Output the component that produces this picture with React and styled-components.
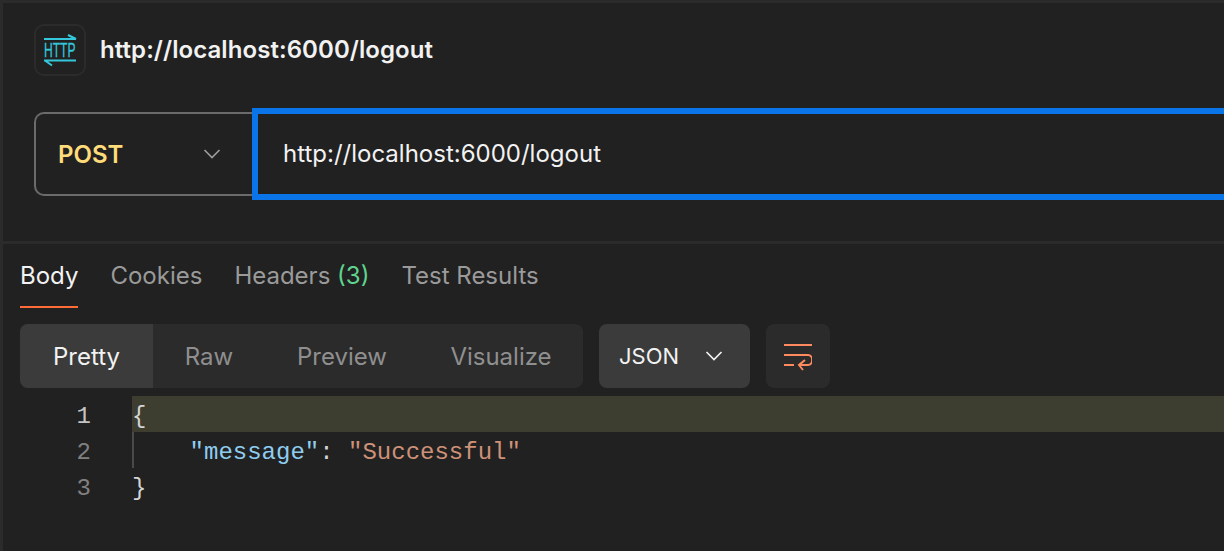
import React from "react";
import styled, { createGlobalStyle } from 'styled-components';

const Global = createGlobalStyle`
    html, body {
        margin: 0;
        height: 100%;
        background: #212121;
        overflow: hidden;
    }
    #root {
        height: 100%;
    }
`

function HttpIcon(){
    return (
        <svg width="52" height="52" viewBox="0 0 52 52" fill="none">
            <path d="M10 15H42M34 11L42 15M10 36.5H42M11 36.5L18 41.5" stroke="#35c7dc" strokeWidth="2"/>
            <text transform="translate(10 33) scale(.62 1)" fontFamily="'Liberation Sans', sans-serif" fontSize="19.5" fill="#35c7dc" stroke="#35c7dc" strokeWidth="0.3">HTTP</text>
        </svg>
    )
}

function Chevron({ color }){
    return (
        <svg width="18" height="10" viewBox="0 0 18 10" fill="none">
            <path d="M1.5 1L9 8.5L16.5 1" stroke={color} strokeWidth="1.7"/>
        </svg>
    )
}

function WrapIcon(){
    return (
        <svg width="28" height="32" viewBox="0 0 28 32" fill="none">
            <path d="M0 5H28M0 15H24C29.5 15 29.5 25 24 25H15M21 20L15 25L19 30M0 25H10" stroke="#ff8a5f" strokeWidth="2"/>
        </svg>
    )
}

export default function App(){
    return (
        <Page>
            <Global />
            <Request>
                <Title>
                    <IconBox><HttpIcon /></IconBox>
                    <h1>http://localhost:6000/logout</h1>
                </Title>
                <UrlRow>
                    <Method>
                        <span>POST</span>
                        <Chevron color="#9b9b9b" />
                    </Method>
                    <UrlInput>http://localhost:6000/logout</UrlInput>
                </UrlRow>
            </Request>
            <Response>
                <Tabs>
                    <Tab $active>Body</Tab>
                    <Tab>Cookies</Tab>
                    <Tab>Headers <Count>(3)</Count></Tab>
                    <Tab>Test Results</Tab>
                </Tabs>
                <Toolbar>
                    <Segments>
                        <Segment $active $width={133}>Pretty</Segment>
                        <Segment $width={112}>Raw</Segment>
                        <Segment $width={154}>Preview</Segment>
                        <Segment $width={164}>Visualize</Segment>
                    </Segments>
                    <FormatSelect>
                        <span>JSON</span>
                        <Chevron color="#f2f2f2" />
                    </FormatSelect>
                    <WrapButton><WrapIcon /></WrapButton>
                </Toolbar>
                <Editor>
                    <Line $highlight>
                        <LineNo $current>1</LineNo>
                        <Code>{'{'}</Code>
                    </Line>
                    <Line>
                        <LineNo>2</LineNo>
                        <Code $guide>{'    '}<Key>"message"</Key><Colon>: </Colon><Str>"Successful"</Str></Code>
                    </Line>
                    <Line>
                        <LineNo>3</LineNo>
                        <Code>{'}'}</Code>
                    </Line>
                </Editor>
            </Response>
        </Page>
    )
}

const Page = styled.div`
    height: 551px;
    box-sizing: border-box;
    border-top: 3px solid #2b2b2b;
    border-left: 3px solid #2b2b2b;
    background: #212121;
    color: #f2f2f2;
    font-family: Inter, "Liberation Sans", sans-serif;
    overflow: hidden;
`

const Request = styled.div`
    height: 241px;
    box-sizing: border-box;
    padding: 21px 0 0 31px;
    border-bottom: 3px solid #2b2b2b;
`

const Title = styled.div`
    display: flex;
    align-items: center;
    gap: 14px;
    h1 {
        margin: -1px 0 0;
        font-size: 24px;
        letter-spacing: 0.07px;
        font-weight: 600;
        color: #f2f2f2;
    }
`

const IconBox = styled.div`
    width: 52px;
    height: 52px;
    box-sizing: border-box;
    border: 2px solid #2b2b2b;
    border-radius: 10px;
    svg {
        display: block;
        margin: -2px;
    }
`

const UrlRow = styled.div`
    display: flex;
    align-items: center;
    margin-top: 32px;
`

const Method = styled.div`
    width: 221px;
    height: 84px;
    flex: none;
    box-sizing: border-box;
    padding: 0 34px 0 22px;
    display: flex;
    align-items: center;
    justify-content: space-between;
    border: 2px solid #6b6b6b;
    border-right: 0;
    border-radius: 10px 0 0 10px;
    span {
        font-size: 24px;
        font-weight: 600;
        color: #ffdc7a;
    }
`

const UrlInput = styled.div`
    flex: 1;
    height: 92px;
    box-sizing: border-box;
    margin: 0 -20px 0 -3px;
    padding: 0 0 2px 25px;
    display: flex;
    align-items: center;
    border: 6px solid #0a75e8;
    font-size: 24px;
    color: #f2f2f2;
`

const Response = styled.div`
    padding-left: 17px;
`

const Tabs = styled.div`
    display: flex;
    gap: 32px;
    height: 64px;
`

const Tab = styled.div`
    height: 64px;
    box-sizing: border-box;
    padding-top: 18px;
    font-size: 24px;
    line-height: 28px;
    white-space: pre;
    color: ${props => props.$active ? '#f2f2f2' : '#9a9a9a'};
    border-bottom: 2px solid ${props => props.$active ? '#ff6c37' : 'transparent'};
`

const Count = styled.span`
    color: #5fd48f;
`

const Toolbar = styled.div`
    display: flex;
    gap: 16px;
    margin-top: 16px;
    height: 64px;
`

const Segments = styled.div`
    display: flex;
    border-radius: 8px;
    overflow: hidden;
    background: #2b2b2b;
`

const Segment = styled.div`
    width: ${props => props.$width}px;
    display: flex;
    align-items: center;
    justify-content: center;
    font-size: 24px;
    color: ${props => props.$active ? '#f2f2f2' : '#8f8f8f'};
    background: ${props => props.$active ? '#3b3b3b' : 'transparent'};
`

const FormatSelect = styled.div`
    width: 151px;
    box-sizing: border-box;
    padding: 0 27px 0 20px;
    display: flex;
    align-items: center;
    justify-content: space-between;
    border-radius: 8px;
    background: #3b3b3b;
    font-size: 22px;
    color: #f2f2f2;
`

const WrapButton = styled.div`
    width: 64px;
    display: flex;
    align-items: center;
    justify-content: center;
    border-radius: 8px;
    background: #2b2b2b;
`

const Editor = styled.div`
    margin: 8px 0 0 -17px;
    font-family: "Liberation Mono", "DejaVu Sans Mono", monospace;
    font-size: 24px;
`

const Line = styled.div`
    display: flex;
    height: 36px;
    line-height: 41px;
    white-space: pre;
    & > div:last-child {
        background: ${props => props.$highlight ? '#3e3e30' : 'transparent'};
    }
`

const LineNo = styled.div`
    width: 88px;
    flex: none;
    text-align: right;
    padding-right: 41px;
    color: ${props => props.$current ? '#c4c4c4' : '#808080'};
`

const Code = styled.div`
    flex: 1;
    color: #d4d4d4;
    box-shadow: ${props => props.$guide ? 'inset 2px 0 0 #4a4a4a' : 'none'};
`

const Key = styled.span`
    color: #8fcdf0;
`

const Colon = styled.span`
    color: #d4d4d4;
`

const Str = styled.span`
    color: #ce9178;
`
